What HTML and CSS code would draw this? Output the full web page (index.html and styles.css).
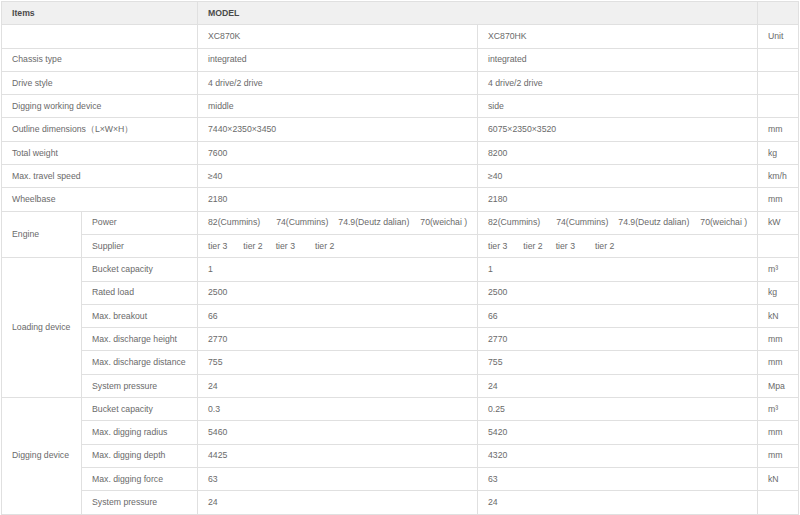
FILE: index.html
```html
<!DOCTYPE html>
<html>
<head>
<meta charset="utf-8">
<link rel="stylesheet" href="styles.css">
</head>
<body>
<table class="spec">
  <colgroup>
    <col class="c-a"><col class="c-b"><col class="c-c"><col class="c-d"><col class="c-e">
  </colgroup>
  <tr class="head">
    <td colspan="2">Items</td>
    <td colspan="2">MODEL</td>
    <td></td>
  </tr>
  <tr><td colspan="2"></td><td>XC870K</td><td>XC870HK</td><td>Unit</td></tr>
  <tr><td colspan="2">Chassis type</td><td>integrated</td><td>integrated</td><td></td></tr>
  <tr><td colspan="2">Drive style</td><td>4 drive/2 drive</td><td>4 drive/2 drive</td><td></td></tr>
  <tr><td colspan="2">Digging working device</td><td>middle</td><td>side</td><td></td></tr>
  <tr><td colspan="2">Outline dimensions（L×W×H）</td><td>7440×2350×3450</td><td>6075×2350×3520</td><td>mm</td></tr>
  <tr><td colspan="2">Total weight</td><td>7600</td><td>8200</td><td>kg</td></tr>
  <tr><td colspan="2">Max. travel speed</td><td>≥40</td><td>≥40</td><td>km/h</td></tr>
  <tr><td colspan="2">Wheelbase</td><td>2180</td><td>2180</td><td>mm</td></tr>
  <tr>
    <td rowspan="2">Engine</td><td>Power</td>
    <td><span class="p1">82(Cummins)</span><span class="p2">74(Cummins)</span><span class="p3">74.9(Deutz dalian)</span><span>70(weichai )</span></td>
    <td><span class="p1">82(Cummins)</span><span class="p2">74(Cummins)</span><span class="p3">74.9(Deutz dalian)</span><span>70(weichai )</span></td>
    <td>kW</td>
  </tr>
  <tr>
    <td>Supplier</td>
    <td><span class="t1">tier 3</span><span class="t2">tier 2</span><span class="t3">tier 3</span><span>tier 2</span></td>
    <td><span class="t1">tier 3</span><span class="t2">tier 2</span><span class="t3">tier 3</span><span>tier 2</span></td>
    <td></td>
  </tr>
  <tr><td rowspan="6">Loading device</td><td>Bucket capacity</td><td>1</td><td>1</td><td>m³</td></tr>
  <tr><td>Rated load</td><td>2500</td><td>2500</td><td>kg</td></tr>
  <tr><td>Max. breakout</td><td>66</td><td>66</td><td>kN</td></tr>
  <tr><td>Max. discharge height</td><td>2770</td><td>2770</td><td>mm</td></tr>
  <tr><td>Max. discharge distance</td><td>755</td><td>755</td><td>mm</td></tr>
  <tr><td>System pressure</td><td>24</td><td>24</td><td>Mpa</td></tr>
  <tr><td rowspan="5">Digging device</td><td>Bucket capacity</td><td>0.3</td><td>0.25</td><td>m³</td></tr>
  <tr><td>Max. digging radius</td><td>5460</td><td>5420</td><td>mm</td></tr>
  <tr><td>Max. digging depth</td><td>4425</td><td>4320</td><td>mm</td></tr>
  <tr><td>Max. digging force</td><td>63</td><td>63</td><td>kN</td></tr>
  <tr><td>System pressure</td><td>24</td><td>24</td><td></td></tr>
</table>
</body>
</html>
```

FILE: styles.css
```css
html, body {
  margin: 0;
  padding: 0;
  background: #ffffff;
}
body {
  padding: 1px 0 0 1px;
}
.spec {
  border-collapse: collapse;
  table-layout: fixed;
  width: 797px;
  font-family: "Liberation Sans", Arial, sans-serif;
  font-size: 8.7px;
  color: #6a6a6a;
  border: 1px solid #c8c8c8;
}
.c-a { width: 80px; }
.c-b { width: 116px; }
.c-c { width: 280px; }
.c-d { width: 280px; }
.c-e { width: 41px; }
.spec td {
  border: 1px solid #e0e0e0;
  height: 23.3px;
  padding: 0 0 0 10px;
  box-sizing: border-box;
  white-space: nowrap;
  vertical-align: middle;
  line-height: 1;
}
.spec .head td {
  background: #f0f0f0;
  color: #4a4a4a;
  font-weight: bold;
}
.p1 { margin-right: 16px; }
.p2 { margin-right: 10px; }
.p3 { margin-right: 11px; }
.t1 { margin-right: 16px; }
.t2 { margin-right: 13px; }
.t3 { margin-right: 20px; }
```
